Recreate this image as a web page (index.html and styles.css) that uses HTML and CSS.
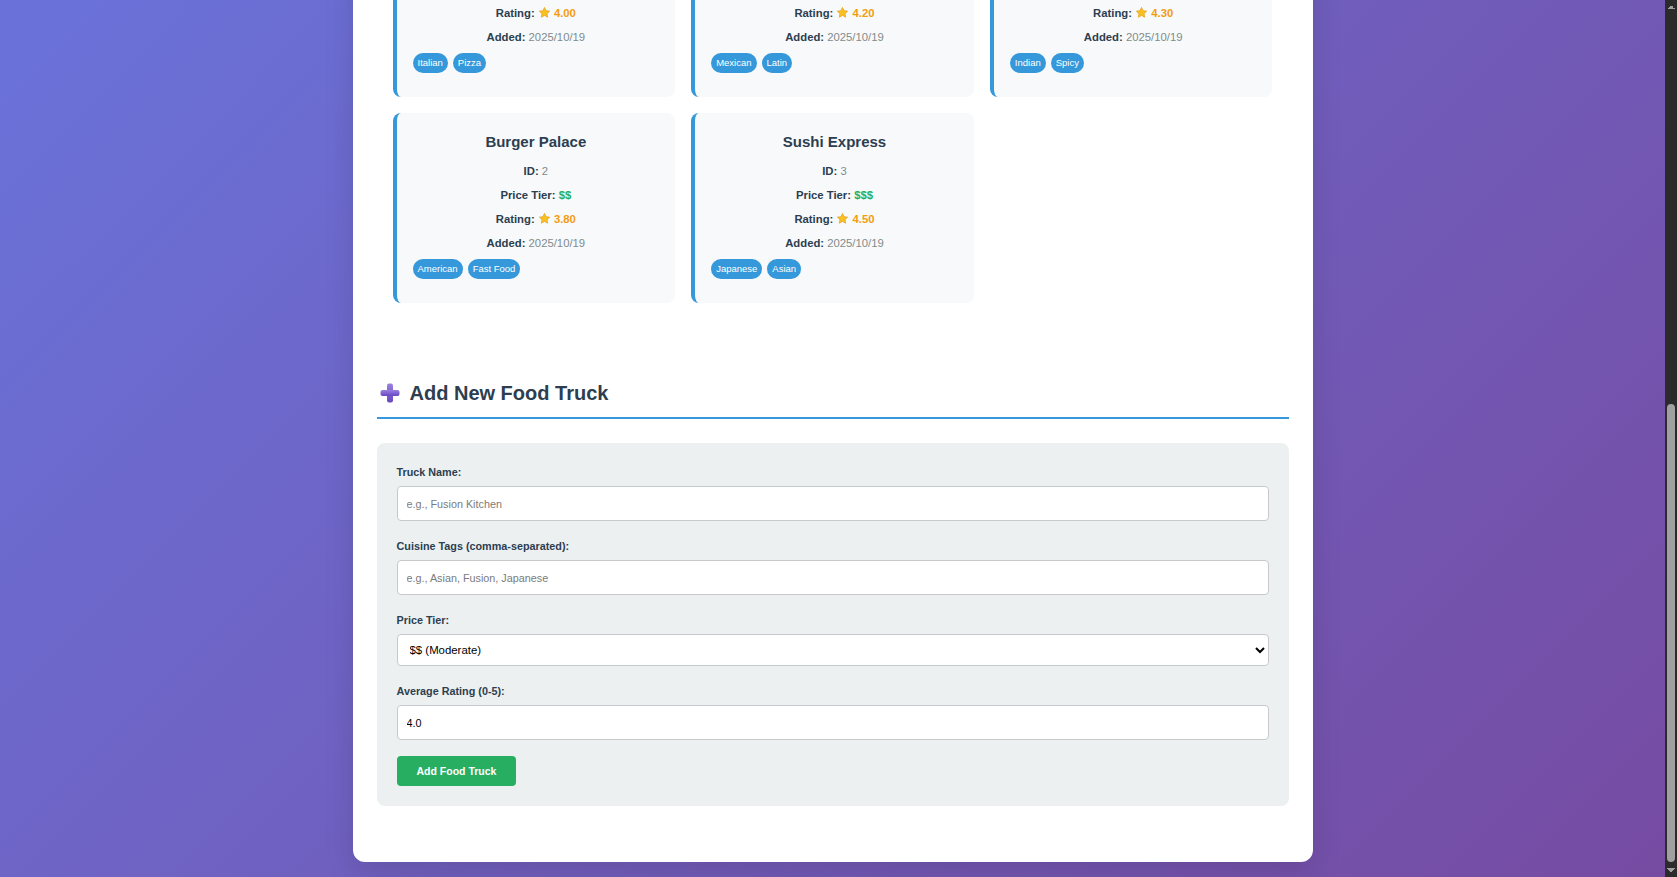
FILE: index.html
```html
<!DOCTYPE html>
<html lang="en">
<head>
<meta charset="utf-8">
<title>Food Truck Directory</title>
<link rel="stylesheet" href="styles.css">
</head>
<body>
<div class="container">
  <header class="page-header">
    <h1 class="page-title">Food Truck Directory</h1>
    <p class="page-subtitle">Browse, filter and add your favourite food trucks</p>
  </header>

  <div class="stats">
    <div class="stat"><div class="stat-value">5</div><div class="stat-label">Total Trucks</div></div>
    <div class="stat"><div class="stat-value">4.16</div><div class="stat-label">Average Rating</div></div>
    <div class="stat"><div class="stat-value">10</div><div class="stat-label">Cuisine Tags</div></div>
  </div>

  <section class="section">
    <h2 class="section-title">Filter Food Trucks</h2>
    <div class="form-box">
      <div class="form-group">
        <label class="field-label" for="search">Search by Name:</label>
        <input class="field" id="search" type="text" placeholder="e.g., Taco">
      </div>
      <div class="form-group">
        <label class="field-label" for="tagfilter">Filter by Cuisine Tag:</label>
        <input class="field" id="tagfilter" type="text" placeholder="e.g., Mexican">
      </div>
      <button class="btn" type="button">Apply Filters</button>
    </div>
  </section>

  <section class="list-section">
    <h2 class="section-title">All Food Trucks</h2>
    <p class="result-count">Showing 5 food trucks</p>
    <div class="truck-grid">
      <div class="truck-card">
        <h3 class="truck-name">Pizza Paradise</h3>
        <p class="detail"><strong>ID:</strong> <span class="muted">1</span></p>
        <p class="detail"><strong>Price Tier:</strong> <span class="price">$$</span></p>
        <p class="detail"><strong>Rating:</strong> <span class="rating"><svg class="star" viewBox="0 0 24 24"><path d="M12 2.6l2.9 6 6.6.9-4.8 4.6 1.2 6.6L12 17.5l-5.9 3.2 1.2-6.6-4.8-4.6 6.6-.9z"/></svg> 4.00</span></p>
        <p class="detail"><strong>Added:</strong> <span class="muted">2025/10/19</span></p>
        <div class="tags"><span class="tag">Italian</span><span class="tag">Pizza</span></div>
      </div>
      <div class="truck-card">
        <h3 class="truck-name">Taco Fiesta</h3>
        <p class="detail"><strong>ID:</strong> <span class="muted">4</span></p>
        <p class="detail"><strong>Price Tier:</strong> <span class="price">$</span></p>
        <p class="detail"><strong>Rating:</strong> <span class="rating"><svg class="star" viewBox="0 0 24 24"><path d="M12 2.6l2.9 6 6.6.9-4.8 4.6 1.2 6.6L12 17.5l-5.9 3.2 1.2-6.6-4.8-4.6 6.6-.9z"/></svg> 4.20</span></p>
        <p class="detail"><strong>Added:</strong> <span class="muted">2025/10/19</span></p>
        <div class="tags"><span class="tag">Mexican</span><span class="tag">Latin</span></div>
      </div>
      <div class="truck-card">
        <h3 class="truck-name">Curry House</h3>
        <p class="detail"><strong>ID:</strong> <span class="muted">5</span></p>
        <p class="detail"><strong>Price Tier:</strong> <span class="price">$$</span></p>
        <p class="detail"><strong>Rating:</strong> <span class="rating"><svg class="star" viewBox="0 0 24 24"><path d="M12 2.6l2.9 6 6.6.9-4.8 4.6 1.2 6.6L12 17.5l-5.9 3.2 1.2-6.6-4.8-4.6 6.6-.9z"/></svg> 4.30</span></p>
        <p class="detail"><strong>Added:</strong> <span class="muted">2025/10/19</span></p>
        <div class="tags"><span class="tag">Indian</span><span class="tag">Spicy</span></div>
      </div>
      <div class="truck-card">
        <h3 class="truck-name">Burger Palace</h3>
        <p class="detail"><strong>ID:</strong> <span class="muted">2</span></p>
        <p class="detail"><strong>Price Tier:</strong> <span class="price">$$</span></p>
        <p class="detail"><strong>Rating:</strong> <span class="rating"><svg class="star" viewBox="0 0 24 24"><path d="M12 2.6l2.9 6 6.6.9-4.8 4.6 1.2 6.6L12 17.5l-5.9 3.2 1.2-6.6-4.8-4.6 6.6-.9z"/></svg> 3.80</span></p>
        <p class="detail"><strong>Added:</strong> <span class="muted">2025/10/19</span></p>
        <div class="tags"><span class="tag">American</span><span class="tag">Fast Food</span></div>
      </div>
      <div class="truck-card">
        <h3 class="truck-name">Sushi Express</h3>
        <p class="detail"><strong>ID:</strong> <span class="muted">3</span></p>
        <p class="detail"><strong>Price Tier:</strong> <span class="price">$$$</span></p>
        <p class="detail"><strong>Rating:</strong> <span class="rating"><svg class="star" viewBox="0 0 24 24"><path d="M12 2.6l2.9 6 6.6.9-4.8 4.6 1.2 6.6L12 17.5l-5.9 3.2 1.2-6.6-4.8-4.6 6.6-.9z"/></svg> 4.50</span></p>
        <p class="detail"><strong>Added:</strong> <span class="muted">2025/10/19</span></p>
        <div class="tags"><span class="tag">Japanese</span><span class="tag">Asian</span></div>
      </div>
    </div>
  </section>

  <section class="form-section">
    <h2 class="section-title"><svg class="plus-icon" viewBox="0 0 20 20"><defs><linearGradient id="pg" x1="0" y1="0" x2="0" y2="1"><stop offset="0" stop-color="#9a80e2"/><stop offset="1" stop-color="#6847c0"/></linearGradient></defs><rect x="7" y="0.5" width="6" height="19" rx="2" fill="url(#pg)"/><rect x="0.5" y="7" width="19" height="6" rx="2" fill="url(#pg)"/></svg><span>Add New Food Truck</span></h2>
    <form class="form-box">
      <div class="form-group">
        <label class="field-label" for="name">Truck Name:</label>
        <input class="field" id="name" type="text" placeholder="e.g., Fusion Kitchen">
      </div>
      <div class="form-group">
        <label class="field-label" for="tags">Cuisine Tags (comma-separated):</label>
        <input class="field" id="tags" type="text" placeholder="e.g., Asian, Fusion, Japanese">
      </div>
      <div class="form-group">
        <label class="field-label" for="tier">Price Tier:</label>
        <select class="field select" id="tier">
          <option>$ (Budget)</option>
          <option selected>$$ (Moderate)</option>
          <option>$$$ (Premium)</option>
        </select>
      </div>
      <div class="form-group">
        <label class="field-label" for="rating">Average Rating (0-5):</label>
        <input class="field" id="rating" type="text" value="4.0">
      </div>
      <button class="btn" type="button">Add Food Truck</button>
    </form>
  </section>
</div>

<div class="scrollbar" aria-hidden="true">
  <span class="sb-btn sb-up"></span>
  <div class="sb-track"><span class="sb-thumb"></span></div>
  <span class="sb-btn sb-down"></span>
</div>
<script src="script.js"></script>
</body>
</html>
```

FILE: styles.css
```css
html {
  scrollbar-width: none;
}

html, body {
  margin: 0;
}

body {
  font-family: "Liberation Sans", Arial, sans-serif;
  background: linear-gradient(135deg, #667eea 0%, #764ba2 100%);
  padding: 15px 12px 15px 0;
  color: #2c3e50;
}

/* emulated window scrollbar (overlays the right edge of the viewport) */
.scrollbar {
  position: fixed;
  top: 0;
  right: 0;
  bottom: 0;
  width: 12px;
  background: #2b2b2b;
  display: flex;
  flex-direction: column;
}
.sb-btn {
  flex: none;
  height: 14px;
  background-repeat: no-repeat;
  background-position: center;
  background-size: 8px 4px;
}
.sb-up {
  background-image: conic-gradient(from 135deg at 50% 0%, #9f9f9f 0deg 90deg, transparent 90deg);
}
.sb-down {
  background-image: conic-gradient(from -45deg at 50% 100%, #9f9f9f 0deg 90deg, transparent 90deg);
}
.sb-track {
  flex: 1;
  display: flex;
  flex-direction: column;
  justify-content: flex-end;
  padding: 0 2px 1px;
}
.sb-thumb {
  height: 458px;
  background: #a0a0a0;
  border-radius: 4px;
}

.container {
  width: 960px;
  margin: 0 auto;
  background: #fff;
  border-radius: 12px;
  padding: 24px;
  box-sizing: border-box;
  box-shadow: 0 10px 30px rgba(0, 0, 0, 0.12);
}

/* header (scrolled out of view) */
.page-header {
  text-align: center;
  padding-bottom: 20px;
  border-bottom: 2px solid #3498db;
  margin-bottom: 30px;
}
.page-title {
  margin: 0 0 6px;
  font-size: 28px;
  line-height: 34px;
}
.page-subtitle {
  margin: 0;
  font-size: 13px;
  line-height: 18px;
  color: #7f8c8d;
}
.stats {
  display: grid;
  grid-template-columns: repeat(3, 1fr);
  gap: 16px;
  margin-bottom: 25px;
}
.stat {
  background: #f8f9fa;
  border-radius: 8px;
  padding: 12px;
  text-align: center;
}
.stat-value {
  font-size: 22px;
  line-height: 26px;
  font-weight: bold;
  color: #3498db;
  margin-bottom: 4px;
}
.stat-label {
  font-size: 11px;
  line-height: 14px;
  color: #7f8c8d;
}
.section {
  margin-bottom: 40px;
}
.result-count {
  margin: 0 0 16px;
  font-size: 11px;
  line-height: 16px;
  color: #7f8c8d;
}

/* section headings */
.section-title {
  display: flex;
  align-items: center;
  gap: 10px;
  margin: 0 0 24px;
  padding-bottom: 10px;
  border-bottom: 2px solid #3498db;
  font-size: 20px;
  line-height: 28px;
  font-weight: bold;
  color: #2c3e50;
}
.plus-icon {
  width: 20px;
  height: 20px;
  margin-left: 3px;
  flex: none;
}

/* cards */
.list-section {
  margin-bottom: 76px;
}
.truck-grid {
  display: grid;
  grid-template-columns: repeat(3, 1fr);
  gap: 16px;
  padding: 0 16px;
}
.truck-card {
  background: #f8f9fa;
  border-left: 4px solid #3498db;
  border-radius: 8px;
  padding: 16px 16px 24px;
}
.truck-name {
  margin: 0 0 8px;
  text-align: center;
  font-size: 15px;
  line-height: 26px;
  font-weight: bold;
  color: #2c3e50;
}
.detail {
  margin: 0 0 8px;
  text-align: center;
  font-size: 11.3px;
  line-height: 16px;
}
.detail strong {
  color: #2c3e50;
}
.muted {
  color: #7f8c8d;
}
.price {
  color: #27ae60;
  font-weight: bold;
}
.rating {
  color: #f39c12;
  font-weight: bold;
}
.star {
  width: 13px;
  height: 13px;
  vertical-align: -2px;
  fill: #f8c123;
  stroke: #e7a21b;
  stroke-width: 1.4;
  stroke-linejoin: round;
}
.tags {
  display: flex;
  flex-wrap: wrap;
  gap: 5px;
  margin-top: 3px;
}
.tag {
  background: #3498db;
  color: #fff;
  font-size: 9.5px;
  height: 20px;
  line-height: 20px;
  padding: 0 5px;
  border-radius: 10px;
}

/* form */
.form-section {
  margin-bottom: 32px;
}
.form-box {
  display: block;
  margin: 0;
  background: #ecf0f1;
  border-radius: 8px;
  padding: 20px;
}
.form-group {
  margin-bottom: 16px;
}
.field-label {
  display: block;
  margin-bottom: 4px;
  font-size: 10.8px;
  line-height: 19px;
  font-weight: bold;
  color: #2c3e50;
}
.field {
  display: block;
  width: 100%;
  box-sizing: border-box;
  height: 35px;
  padding: 0 9px;
  border: 1px solid #c6cacd;
  border-radius: 4px;
  background: #fff;
  font-family: "Liberation Sans", Arial, sans-serif;
  font-size: 10.8px;
  color: #000;
}
.field::placeholder {
  color: #7b7b7b;
}
.select {
  height: 32px;
  padding: 0 8px;
  font-size: 11.4px;
}
.btn {
  display: block;
  height: 30px;
  padding: 0 20px;
  border: none;
  border-radius: 4px;
  background: #27ae60;
  color: #fff;
  font-family: "Liberation Sans", Arial, sans-serif;
  font-size: 10.5px;
  font-weight: bold;
}
```

FILE: script.js
```js
window.scrollTo(0, document.documentElement.scrollHeight);
window.addEventListener('load', function () {
  window.scrollTo(0, document.documentElement.scrollHeight);
});
```
